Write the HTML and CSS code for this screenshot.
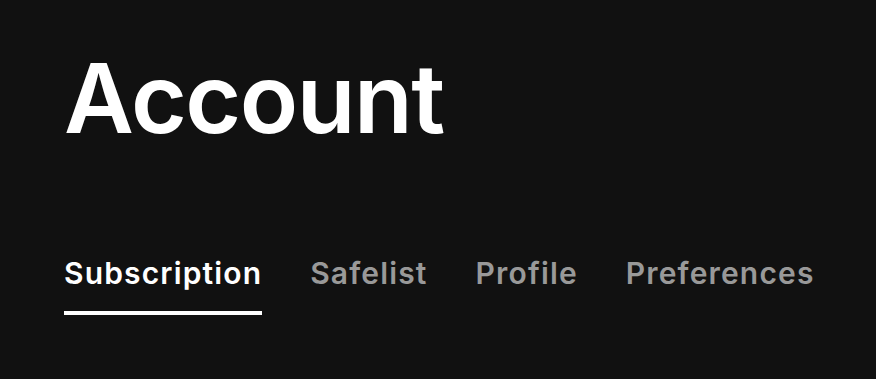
FILE: index.html
```html
<!DOCTYPE html>
<html lang="en">
<head>
    <meta charset="UTF-8">
    <title>Account</title>
    <link rel="stylesheet" href="styles.css">
</head>
<body>
    <div class="page">
        <h1 class="page-title">Account</h1>
        <!-- tabs -->
        <nav class="tabs">
            <a class="tab active">Subscription</a>
            <a class="tab">Safelist</a>
            <a class="tab">Profile</a>
            <a class="tab">Preferences</a>
        </nav>
    </div>
</body>
</html>
```

FILE: styles.css
```css
body {
    margin: 0;
    background-color: #111111;
    font-family: Inter, "Noto Sans", sans-serif;
    color: #fff;
}

.page {
    padding: 38px 64px 0;
}

.page-title {
    margin: 0;
    font-size: 96px;
    font-weight: 600;
    letter-spacing: -1.5px;
    line-height: 120px;
}

.tabs {
    display: flex;
    gap: 48px;
    margin-top: 97px;
}

.tab {
    font-size: 30px;
    font-weight: 600;
    letter-spacing: 1.15px;
    color: #999999;
    padding-bottom: 20px;
    border-bottom: 4px solid transparent;
    line-height: 36px;
    cursor: pointer;
}

/* 選択中のタブ */
.tab.active {
    color: #fff;
    border-bottom-color: #fff;
}
```
